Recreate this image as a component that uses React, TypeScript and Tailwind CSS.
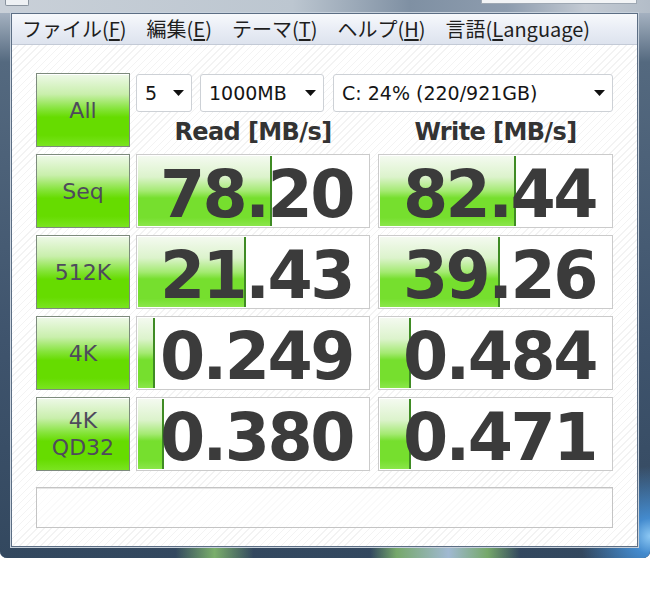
const rows = [
  { label: 'Seq', read: '78.20', readBar: 134, write: '82.44', writeBar: 136 },
  { label: '512K', read: '21.43', readBar: 108, write: '39.26', writeBar: 120 },
  { label: '4K', read: '0.249', readBar: 17, write: '0.484', writeBar: 31 },
  { label: '4K QD32', read: '0.380', readBar: 26, write: '0.471', writeBar: 31 },
];

const menu = [
  { pre: 'ファイル(', key: 'F', post: ')' },
  { pre: '編集(', key: 'E', post: ')' },
  { pre: 'テーマ(', key: 'T', post: ')' },
  { pre: 'ヘルプ(', key: 'H', post: ')' },
  { pre: '言語(', key: 'L', post: 'anguage)' },
];

function Arrow() {
  return (
    <svg width="11" height="6" viewBox="0 0 11 6" className="shrink-0">
      <path d="M0 0h11L5.5 6z" fill="#111" />
    </svg>
  );
}

function Dropdown({ label, width }: { label: string; width: string }) {
  return (
    <div className={`flex h-[38px] items-center justify-between rounded-[3px] border border-[#cdd1d6] bg-white pl-[8px] pr-[7px] font-['DejaVu_Sans',sans-serif] text-[19px] text-[#151515] ${width}`}>
      <span>{label}</span>
      <Arrow />
    </div>
  );
}

function GreenButton({ label }: { label: string }) {
  const lines = label.split(' ');
  return (
    <div className="flex h-[74px] w-[94px] shrink-0 flex-col items-center justify-center border border-[#7d8b7d] bg-[linear-gradient(to_bottom,#eef9e8_0%,#c9efac_28%,#86e43c_48%,#66dc00_60%,#66dc00_85%,#7ae420_100%)] font-['Comic_Sans_MS','DejaVu_Sans',sans-serif] text-[22px] leading-[27px] text-[#4e4a5c] shadow-[inset_0_1px_0_#ffffff]">
      {lines.map((l) => (
        <span key={l}>{l}</span>
      ))}
    </div>
  );
}

function ValueCell({ value, bar }: { value: string; bar: number }) {
  return (
    <div className="relative h-[74px] border border-[#cbcbcb] bg-white p-px">
      <div
        className="h-full border-r-2 border-[#3f8b24] bg-[linear-gradient(to_bottom,#f4faf0_0%,#dcf3cc_30%,#a4ea72_50%,#76df2e_60%,#76df2e_88%,#8ae64a_100%)]"
        style={{ width: bar }}
      />
      <span className="absolute inset-0 flex items-center justify-end pr-[16px] pt-[6px] font-['DejaVu_Sans',sans-serif] text-[65px] font-bold leading-none tracking-[-2.5px] text-[#3b3b3b]">
        {value}
      </span>
    </div>
  );
}

export default function App() {
  return (
    <div className="h-[592px] w-[650px] overflow-hidden bg-white">
      <div className="flex h-[558px] flex-col overflow-hidden rounded-b-[7px] bg-[#3e546e] shadow-[inset_0_-1px_0_#8ea1b5]">
        {/* title strip of the window frame */}
        <div className="flex h-[13px] shrink-0 items-start bg-[linear-gradient(to_right,#c9d0d8_0%,#bcc6d0_45%,#7f90a3_63%,#8d9cae_78%,#c3cad3_90%,#b3bdc8_100%)]">
          <div className="ml-[5px] h-[6px] w-[24px] rounded-b-[2px] border border-t-0 border-[#8a949f] bg-[#eef1f4]" />
          <div className="mr-[13px] ml-auto h-[4px] w-[156px] border border-t-0 border-[#9ea8b3] bg-[#f2f4f6]" />
        </div>

        <div className="flex flex-1 flex-col bg-[image:radial-gradient(circle_at_100%_96%,#8cc8f4_0px,rgba(70,150,225,0.85)_18px,transparent_70px),linear-gradient(to_right,transparent_27%,rgba(140,200,110,0.8)_33%,transparent_39%,transparent_57%,rgba(140,200,110,0.75)_61%,rgba(180,205,230,0.85)_69%,rgba(140,200,110,0.75)_75%,transparent_80%),linear-gradient(to_bottom,#a4b1c0_0%,#54697f_9%,#3f546d_60%,#33485f_100%)] pb-[11px] pl-[11px] pr-[12px]">
          <div className="flex flex-1 flex-col border border-[#5c6e84] bg-white shadow-[0_0_0_1px_#c7d1dc]">
            {/* menu bar */}
            <div className="flex h-[31px] shrink-0 items-center gap-[20px] border-b border-[#c3cad6] bg-[linear-gradient(to_bottom,#f7f9fc_0%,#e9edf5_50%,#dde3ee_100%)] pl-[10px] font-['Noto_Sans_CJK_JP',sans-serif] text-[20px] leading-none text-[#1e1e1e]">
              {menu.map((m) => (
                <span key={m.key}>
                  {m.pre}
                  <span className="underline underline-offset-2">{m.key}</span>
                  {m.post}
                </span>
              ))}
            </div>

            {/* main panel */}
            <div className="flex flex-1 flex-col bg-[image:repeating-linear-gradient(135deg,#ffffff_0px,#ffffff_4px,#f3f3f3_4px,#f3f3f3_5px)] pl-[24px] pr-[24px] pt-[28px]">
              <div className="flex">
                <GreenButton label="All" />
                <div className="ml-[6px] flex flex-col">
                  <div className="mt-px flex gap-[8px]">
                    <Dropdown label="5" width="w-[56px]" />
                    <Dropdown label="1000MB" width="w-[124px]" />
                    <Dropdown label="C: 24% (220/921GB)" width="ml-px w-[280px]" />
                  </div>
                  <div className="flex h-[35px] items-center gap-[8px] pt-[5px] font-['DejaVu_Sans',sans-serif] text-[24px] font-bold leading-none tracking-[-0.6px] text-[#333333]">
                    <span className="w-[234px] text-center">Read [MB/s]</span>
                    <span className="w-[235px] text-center">Write [MB/s]</span>
                  </div>
                </div>
              </div>

              {rows.map((r) => (
                <div key={r.label} className="mt-[7px] flex">
                  <GreenButton label={r.label} />
                  <div className="ml-[6px] grid flex-1 grid-cols-[234px_235px] gap-[8px]">
                    <ValueCell value={r.read} bar={r.readBar} />
                    <ValueCell value={r.write} bar={r.writeBar} />
                  </div>
                </div>
              ))}

              <div className="mt-[16px] h-[41px] border border-[#c4c4c4] bg-white/60 shadow-[inset_0_1px_0_#e6e6e6]" />
            </div>
          </div>
        </div>
      </div>
    </div>
  );
}
